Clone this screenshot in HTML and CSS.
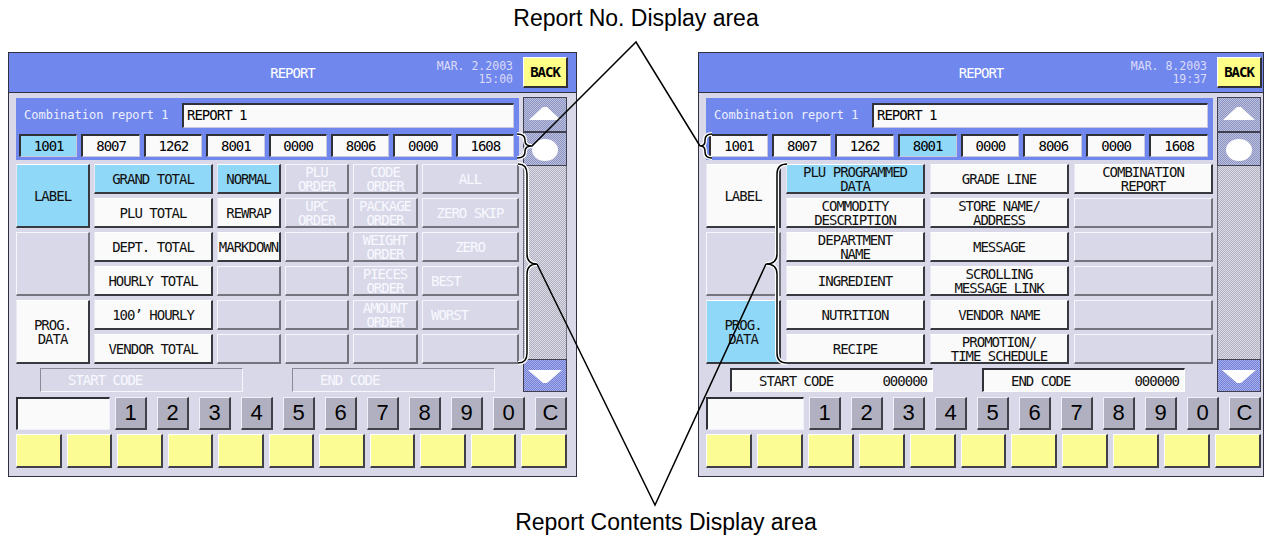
FILE: index.html
```html
<!DOCTYPE html>
<html lang="en">
<head>
    <meta charset="UTF-8">
    <meta name="viewport" content="width=device-width, initial-scale=1.0">
    <title>Combination Report Screens</title>
    <link rel="stylesheet" href="styles.css">
</head>
<body>
    <!-- Top caption -->
    <div class="caption caption-top">Report No. Display area</div>

    <div class="screens">
        <!-- Left screen: report options -->
        <div class="screen">
            <div class="header">
                <span></span>
                <span class="title">REPORT</span>
                <div class="header-right">
                    <div class="date">MAR. 2.2003<br>15:00</div>
                    <div class="back">BACK</div>
                </div>
            </div>
            <div class="body">
                <div class="main">
                    <div class="content">
                        <div class="panel">
                            <div class="name-row">
                                <span class="name-label">Combination report 1</span>
                                <span class="name-input">REPORT 1</span>
                            </div>
                            <div class="numbers">
                                <span class="num sel">1001</span>
                                <span class="num">8007</span>
                                <span class="num">1262</span>
                                <span class="num">8001</span>
                                <span class="num">0000</span>
                                <span class="num">8006</span>
                                <span class="num">0000</span>
                                <span class="num">1608</span>
                            </div>
                        </div>
                        <div class="grid grid-six">
                            <div class="cell tall sel">LABEL</div>
                            <div class="cell tall off"></div>
                            <div class="cell tall">PROG.<br>DATA</div>

                            <div class="cell sel">GRAND TOTAL</div>
                            <div class="cell">PLU TOTAL</div>
                            <div class="cell">DEPT. TOTAL</div>
                            <div class="cell">HOURLY TOTAL</div>
                            <div class="cell">100&rsquo; HOURLY</div>
                            <div class="cell">VENDOR TOTAL</div>

                            <div class="cell sel">NORMAL</div>
                            <div class="cell">REWRAP</div>
                            <div class="cell">MARKDOWN</div>
                            <div class="cell off"></div>
                            <div class="cell off"></div>
                            <div class="cell off"></div>

                            <div class="cell off">PLU<br>ORDER</div>
                            <div class="cell off">UPC<br>ORDER</div>
                            <div class="cell off"></div>
                            <div class="cell off"></div>
                            <div class="cell off"></div>
                            <div class="cell off"></div>

                            <div class="cell off">CODE<br>ORDER</div>
                            <div class="cell off">PACKAGE<br>ORDER</div>
                            <div class="cell off">WEIGHT<br>ORDER</div>
                            <div class="cell off">PIECES<br>ORDER</div>
                            <div class="cell off">AMOUNT<br>ORDER</div>
                            <div class="cell off"></div>

                            <div class="cell off">ALL</div>
                            <div class="cell off">ZERO SKIP</div>
                            <div class="cell off">ZERO</div>
                            <div class="cell off left">BEST</div>
                            <div class="cell off left">WORST</div>
                            <div class="cell off"></div>
                        </div>
                        <div class="codes">
                            <div class="code off"><span>START CODE</span></div>
                            <div class="code off"><span>END CODE</span></div>
                        </div>
                    </div>
                    <div class="scroll">
                        <div class="sb up">
                            <svg width="42" height="33" viewBox="0 0 42 33"><polygon points="19,9 23,9 37,22 5,22" fill="#fff"/></svg>
                        </div>
                        <div class="sb dot">
                            <svg width="42" height="32" viewBox="0 0 42 32"><ellipse cx="21" cy="17" rx="13" ry="11" fill="#fff"/></svg>
                        </div>
                        <div class="track"></div>
                        <div class="sb down">
                            <svg width="42" height="31" viewBox="0 0 42 31"><polygon points="4,10 38,10 23,23 19,23" fill="#fff"/></svg>
                        </div>
                    </div>
                </div>
                <div class="keys">
                    <div class="display"></div>
                    <div class="digits">
                        <span class="key">1</span>
                        <span class="key">2</span>
                        <span class="key">3</span>
                        <span class="key">4</span>
                        <span class="key">5</span>
                        <span class="key">6</span>
                        <span class="key">7</span>
                        <span class="key">8</span>
                        <span class="key">9</span>
                        <span class="key">0</span>
                        <span class="key">C</span>
                    </div>
                </div>
                <div class="fkeys">
                    <span></span><span></span><span></span><span></span><span></span><span></span>
                    <span></span><span></span><span></span><span></span><span></span>
                </div>
            </div>
        </div>

        <!-- Right screen: report contents -->
        <div class="screen narrow">
            <div class="header">
                <span></span>
                <span class="title">REPORT</span>
                <div class="header-right">
                    <div class="date">MAR. 8.2003<br>19:37</div>
                    <div class="back">BACK</div>
                </div>
            </div>
            <div class="body">
                <div class="main">
                    <div class="content">
                        <div class="panel">
                            <div class="name-row">
                                <span class="name-label">Combination report 1</span>
                                <span class="name-input">REPORT 1</span>
                            </div>
                            <div class="numbers">
                                <span class="num">1001</span>
                                <span class="num">8007</span>
                                <span class="num">1262</span>
                                <span class="num sel">8001</span>
                                <span class="num">0000</span>
                                <span class="num">8006</span>
                                <span class="num">0000</span>
                                <span class="num">1608</span>
                            </div>
                        </div>
                        <div class="grid grid-four">
                            <div class="cell tall">LABEL</div>
                            <div class="cell tall off"></div>
                            <div class="cell tall sel">PROG.<br>DATA</div>

                            <div class="cell sel">PLU PROGRAMMED<br>DATA</div>
                            <div class="cell">COMMODITY<br>DESCRIPTION</div>
                            <div class="cell">DEPARTMENT<br>NAME</div>
                            <div class="cell">INGREDIENT</div>
                            <div class="cell">NUTRITION</div>
                            <div class="cell">RECIPE</div>

                            <div class="cell">GRADE LINE</div>
                            <div class="cell">STORE NAME/<br>ADDRESS</div>
                            <div class="cell">MESSAGE</div>
                            <div class="cell">SCROLLING<br>MESSAGE LINK</div>
                            <div class="cell">VENDOR NAME</div>
                            <div class="cell">PROMOTION/<br>TIME SCHEDULE</div>

                            <div class="cell">COMBINATION<br>REPORT</div>
                            <div class="cell off"></div>
                            <div class="cell off"></div>
                            <div class="cell off"></div>
                            <div class="cell off"></div>
                            <div class="cell off"></div>
                        </div>
                        <div class="codes">
                            <div class="code"><span>START CODE</span><span>000000</span></div>
                            <div class="code"><span>END CODE</span><span>000000</span></div>
                        </div>
                    </div>
                    <div class="scroll">
                        <div class="sb up">
                            <svg width="42" height="33" viewBox="0 0 42 33"><polygon points="19,9 23,9 37,22 5,22" fill="#fff"/></svg>
                        </div>
                        <div class="sb dot">
                            <svg width="42" height="32" viewBox="0 0 42 32"><ellipse cx="21" cy="17" rx="13" ry="11" fill="#fff"/></svg>
                        </div>
                        <div class="track"></div>
                        <div class="sb down">
                            <svg width="42" height="31" viewBox="0 0 42 31"><polygon points="4,10 38,10 23,23 19,23" fill="#fff"/></svg>
                        </div>
                    </div>
                </div>
                <div class="keys">
                    <div class="display"></div>
                    <div class="digits">
                        <span class="key">1</span>
                        <span class="key">2</span>
                        <span class="key">3</span>
                        <span class="key">4</span>
                        <span class="key">5</span>
                        <span class="key">6</span>
                        <span class="key">7</span>
                        <span class="key">8</span>
                        <span class="key">9</span>
                        <span class="key">0</span>
                        <span class="key">C</span>
                    </div>
                </div>
                <div class="fkeys">
                    <span></span><span></span><span></span><span></span><span></span><span></span>
                    <span></span><span></span><span></span><span></span><span></span>
                </div>
            </div>
        </div>
    </div>

    <!-- Bottom caption -->
    <div class="caption caption-bottom">Report Contents Display area</div>

    <!-- Callout lines and braces drawn over the screens -->
    <svg class="overlay" width="1270" height="538" viewBox="0 0 1270 538">
        <g class="halo">
            <path d="M517,134 Q525,134 525,140 L525,141 Q525,146 532,146 Q525,146 525,151 L525,152 Q525,158 517,158"/>
            <path d="M712,134 Q705,134 705,140 L705,141 Q705,146 700,146 Q705,146 705,151 L705,152 Q705,158 712,158"/>
            <path d="M518,164 Q527,164 527,174 L527,254 Q527,264 537,264 Q527,264 527,274 L527,353 Q527,363 518,363"/>
            <path d="M787,164 Q777,164 777,174 L777,254 Q777,264 766,264 Q777,264 777,274 L777,353 Q777,363 787,363"/>
        </g>
        <g class="ink">
            <path d="M517,134 Q525,134 525,140 L525,141 Q525,146 532,146 Q525,146 525,151 L525,152 Q525,158 517,158"/>
            <path d="M712,134 Q705,134 705,140 L705,141 Q705,146 700,146 Q705,146 705,151 L705,152 Q705,158 712,158"/>
            <path d="M518,164 Q527,164 527,174 L527,254 Q527,264 537,264 Q527,264 527,274 L527,353 Q527,363 518,363"/>
            <path d="M787,164 Q777,164 777,174 L777,254 Q777,264 766,264 Q777,264 777,274 L777,353 Q777,363 787,363"/>
            <path d="M532,146 L636,42 L700,146"/>
            <path d="M537,264 L655,505 L766,264"/>
        </g>
    </svg>
</body>
</html>
```

FILE: styles.css
```css
/* Basic page */
* {
    box-sizing: border-box;
}

body {
    position: relative;
    width: 1270px;
    height: 538px;
    margin: 0;
    background: #fff;
    font-family: "DejaVu Sans Mono", "Liberation Mono", monospace;
    font-size: 14px;
    letter-spacing: -1px;
    color: #111;
    overflow: hidden;
}

/* Captions */
.caption {
    width: 400px;
    font-family: "Liberation Sans", Arial, sans-serif;
    font-size: 23px;
    line-height: 24px;
    letter-spacing: 0;
    text-align: center;
    color: #000;
}

.caption-top {
    height: 52px;
    margin-left: 436px;
    padding-top: 6px;
}

.caption-bottom {
    margin-left: 466px;
    padding-top: 33px;
}

.screens {
    display: flex;
    gap: 121px;
    padding-left: 8px;
}

/* Screen frame */
.screen {
    width: 569px;
    height: 425px;
    border: 1px solid #303040;
    background: #d8d8e8;
}

.screen.narrow {
    width: 566px;
}

.header {
    display: grid;
    grid-template-columns: 1fr auto 1fr;
    align-items: center;
    height: 40px;
    padding: 0 8px;
    background: #7088ee;
    border-bottom: 1px solid #303040;
}

.narrow .header {
    padding: 0 1px;
}

.title {
    color: #fff;
}

.header-right {
    display: flex;
    justify-content: flex-end;
    align-items: center;
    gap: 10px;
}

.date {
    font-size: 11.5px;
    line-height: 13px;
    letter-spacing: 0;
    text-align: right;
    color: #dcdcf8;
}

.back {
    display: flex;
    align-items: center;
    justify-content: center;
    width: 45px;
    height: 31px;
    background: #ffff88;
    border-style: solid;
    border-width: 1px 2px 2px 1px;
    border-color: #fff #303038 #303038 #fff;
    font-weight: bold;
    color: #000;
}

/* Screen body */
.body {
    padding: 4px 9px 8px 7px;
}

.narrow .body {
    padding-right: 2px;
}

.main {
    display: flex;
    gap: 4px;
    height: 295px;
}

.content {
    flex: 1;
    display: flex;
    flex-direction: column;
}

/* Blue name panel */
.panel {
    height: 62px;
    margin-top: 1px;
    padding: 5px 5px 3px 3px;
    background: #7088ee;
}

.name-row {
    display: flex;
    height: 25px;
}

.name-label {
    width: 163px;
    padding-left: 5px;
    font-size: 12px;
    line-height: 25px;
    letter-spacing: 0;
    color: #eef0ff;
}

.name-input {
    flex: 1;
    padding-left: 3px;
    background: #fafafa;
    border-style: solid;
    border-width: 2px 1px 1px 2px;
    border-color: #303038 #c8c8e0 #c8c8e0 #303038;
    line-height: 21px;
    color: #000;
}

.numbers {
    display: grid;
    grid-template-columns: repeat(8, 1fr);
    gap: 4px;
    height: 23px;
    margin-top: 6px;
}

.num {
    display: flex;
    align-items: center;
    justify-content: center;
    background: #fafafa;
    border-style: solid;
    border-width: 2px 1px 1px 2px;
    border-color: #303038 #c8c8e0 #c8c8e0 #303038;
    color: #000;
}

.num.sel {
    background: #90d8f8;
}

/* Selection grid */
.grid {
    display: grid;
    grid-template-rows: repeat(6, 30px);
    grid-auto-flow: column;
    gap: 4px;
    margin-top: 4px;
}

.grid-six {
    grid-template-columns: 74px 119px 64px 64px 65px 1fr;
}

.grid-four {
    grid-template-columns: 75px 1fr 1fr 1fr;
    column-gap: 5px;
}

.cell {
    display: flex;
    align-items: center;
    justify-content: center;
    text-align: center;
    line-height: 14px;
    background: #fafafa;
    border-style: solid;
    border-width: 1px 2px 2px 1px;
    border-color: #fff #383840 #383840 #e8e8f0;
    color: #111;
}

.cell.tall {
    grid-row: span 2;
}

.cell.sel {
    background: #90d8f8;
}

.cell.off {
    background: #d8d8e8;
    border-color: #f6f6ff #74747e #74747e #f6f6ff;
    color: #f8f8ff;
}

.cell.left {
    justify-content: flex-start;
    padding-left: 8px;
}

/* Start / end code fields */
.codes {
    display: grid;
    grid-template-columns: 203px 203px;
    gap: 49px;
    height: 24px;
    margin-top: 4px;
    padding-left: 24px;
}

.code {
    display: flex;
    align-items: center;
    justify-content: space-between;
    padding: 0 5px 0 27px;
    background: #fafafa;
    border-style: solid;
    border-width: 2px 1px 1px 2px;
    border-color: #303038 #fff #fff #303038;
    color: #111;
}

.code.off {
    background: #d8d8e8;
    border-width: 1px;
    border-color: #8a8a98 #f6f6ff #f6f6ff #8a8a98;
    color: #f8f8ff;
}

/* Scroll bar */
.scroll {
    display: flex;
    flex-direction: column;
    width: 44px;
}

.sb {
    border: 1px solid #404050;
}

.sb svg {
    display: block;
}

.up,
.dot {
    background: repeating-conic-gradient(#8c94c4 0 25%, #bcc0dc 0 50%) 0 0 / 2px 2px;
}

.up {
    height: 35px;
}

.dot {
    height: 34px;
}

.down {
    height: 33px;
    background: repeating-conic-gradient(#7480d8 0 25%, #a8b0ec 0 50%) 0 0 / 2px 2px;
}

.track {
    flex: 1;
    border-left: 1px solid #707080;
    border-right: 1px solid #707080;
    background: repeating-conic-gradient(#b0b0c0 0 25%, #dcdce6 0 50%) 0 0 / 2px 2px;
}

/* Number keys */
.keys {
    display: flex;
    gap: 5px;
    height: 33px;
    margin-top: 5px;
}

.display {
    flex: 1;
    background: #fafafa;
    border-style: solid;
    border-width: 2px 1px 1px 2px;
    border-color: #303038 #f0f0f8 #f0f0f8 #303038;
}

.digits {
    display: flex;
    gap: 10px;
}

.key {
    display: flex;
    align-items: center;
    justify-content: center;
    width: 32px;
    background: #b0b0c0;
    border-style: solid;
    border-width: 1px 2px 2px 1px;
    border-color: #f0f0f8 #404048 #404048 #f0f0f8;
    font-family: "Liberation Sans", Arial, sans-serif;
    font-size: 22px;
    letter-spacing: 0;
    color: #000;
}

/* Function keys */
.fkeys {
    display: grid;
    grid-template-columns: repeat(11, 1fr);
    gap: 5px;
    height: 34px;
    margin-top: 4px;
}

.fkeys span {
    background: #fcfc94;
    border-style: solid;
    border-width: 1px 2px 2px 1px;
    border-color: #fff #404048 #404048 #fff;
}

/* Callout overlay */
.overlay {
    position: absolute;
    top: 0;
    left: 0;
    pointer-events: none;
}

.overlay path {
    fill: none;
}

.halo path {
    stroke: #fff;
    stroke-width: 4;
}

.ink path {
    stroke: #000;
    stroke-width: 1.5;
}
```
